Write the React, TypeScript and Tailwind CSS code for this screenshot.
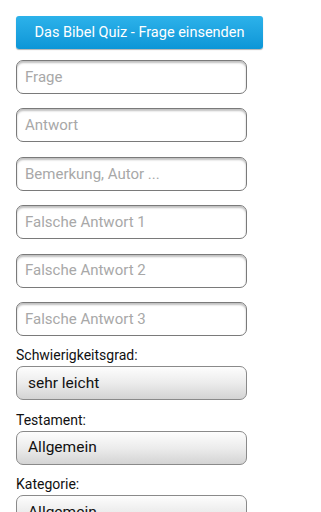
const fields = ["Frage", "Antwort", "Bemerkung, Autor ...", "Falsche Antwort 1", "Falsche Antwort 2", "Falsche Antwort 3"];

const spinners = [
  { label: "Schwierigkeitsgrad:", value: "sehr leicht" },
  { label: "Testament:", value: "Allgemein" },
  { label: "Kategorie:", value: "Allgemein" },
];

export default function App() {
  return (
    <div className="min-h-[512px] bg-white pl-4 pt-4 font-['Roboto',sans-serif]">
      <button className="flex h-[33px] w-[247px] items-center justify-center rounded-[3px] bg-gradient-to-b from-[#2cb2ea] to-[#0b96d7] text-[14.5px] text-white shadow-[0_1px_1px_rgba(0,0,0,0.3)]">
        Das Bibel Quiz - Frage einsenden
      </button>

      <div className="mt-[11px] flex flex-col gap-[14.4px]">
        {fields.map((f) => (
          <div
            key={f}
            className="flex h-[34px] w-[231px] items-center rounded-[7px] border border-[#7a7a7a] bg-white pl-[8px] text-[15px] text-[#a8a8a8] shadow-[inset_0_2px_2px_rgba(0,0,0,0.25)]"
          >
            {f}
          </div>
        ))}
      </div>

      <div className="flex flex-col">
        {spinners.map((s) => (
          <div key={s.label} className="mt-[10.5px]">
            <div className="text-[14px] leading-[19px] text-[#111]">{s.label}</div>
            <div className="mt-px flex h-[34px] w-[231px] items-center rounded-[7px] border border-[#8a8a8a] bg-gradient-to-b from-[#fdfdfd] via-[#ececec] to-[#d4d4d4] pl-[11px] text-[15.5px] text-[#111]">
              {s.value}
            </div>
          </div>
        ))}
      </div>
    </div>
  );
}
